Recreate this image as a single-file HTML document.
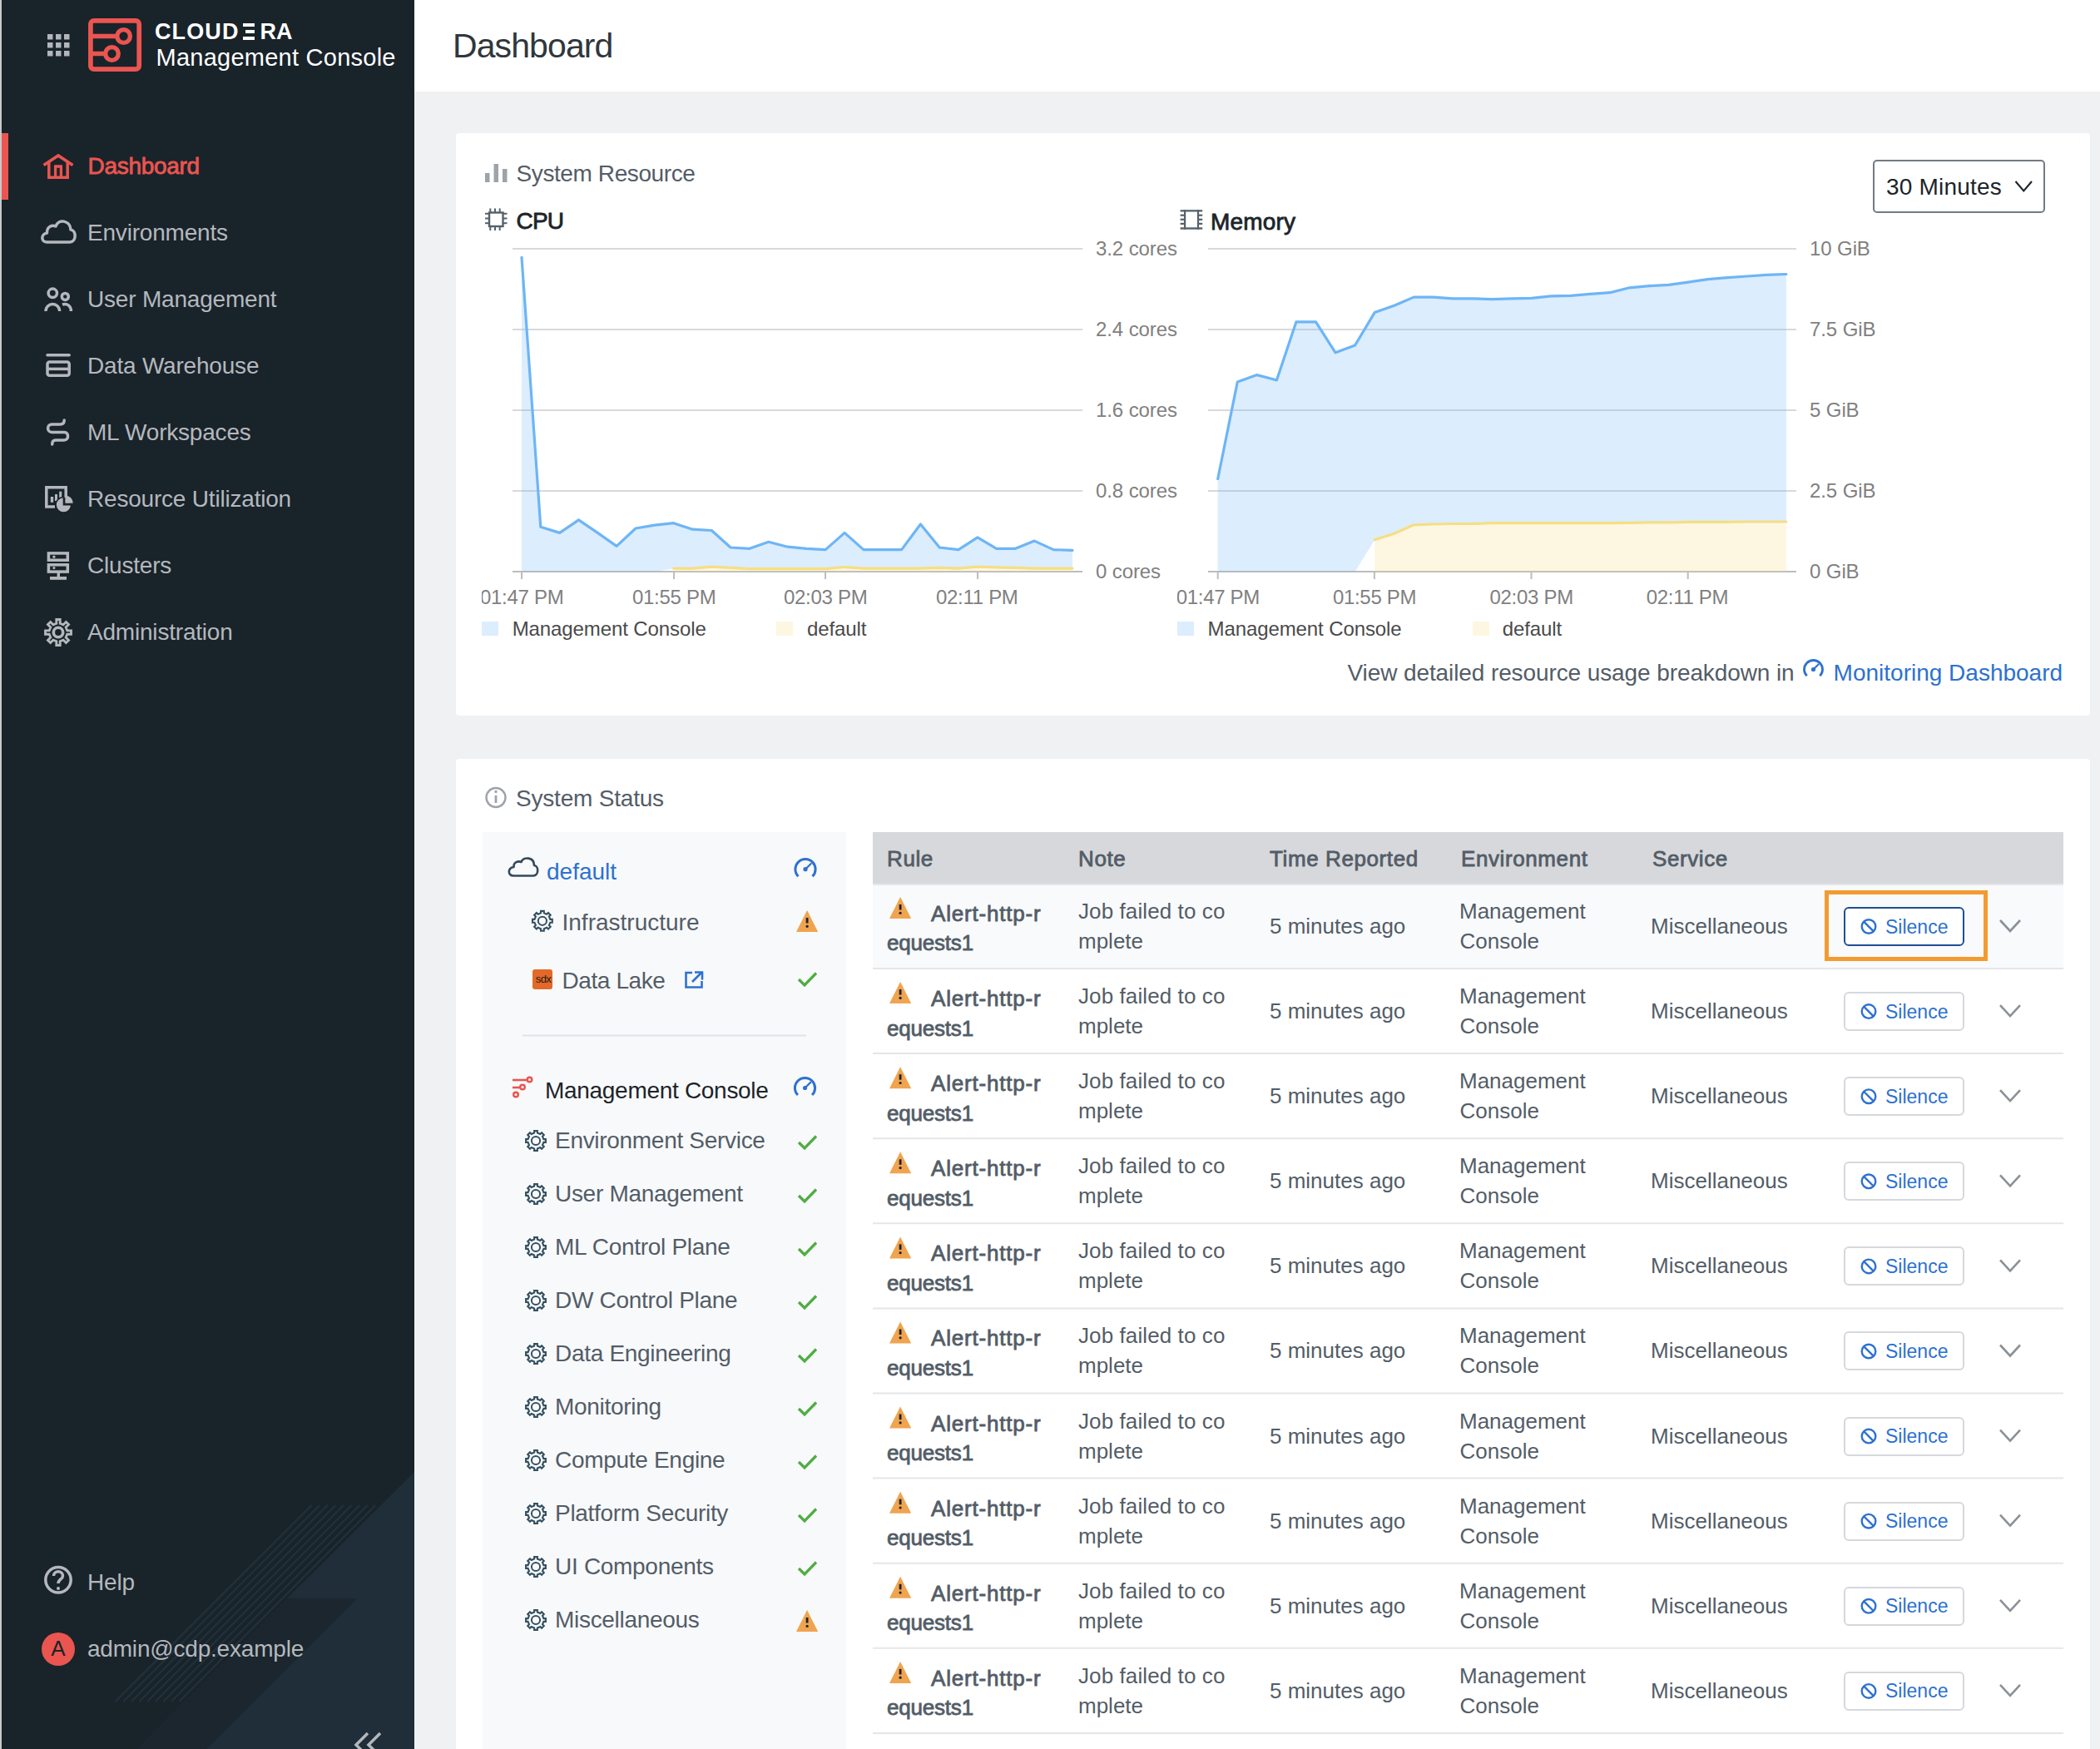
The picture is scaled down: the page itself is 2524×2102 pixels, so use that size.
<!DOCTYPE html><html><head><meta charset="utf-8"><style>
html,body{margin:0;padding:0;}
body{width:2524px;height:2102px;position:relative;overflow:hidden;background:#eff1f3;font-family:"Liberation Sans", sans-serif;}
.t{position:absolute;white-space:nowrap;font-family:"Liberation Sans", sans-serif;}
.r{position:absolute;}
svg{position:absolute;left:0;top:0;overflow:visible;}
</style></head><body>
<div class="r" style="left:498px;top:0px;width:2026px;height:110px;background:#ffffff;"></div>
<div class="t" style="left:544.0px;top:35.1px;font-size:41px;line-height:41px;color:#30373d;font-weight:400;letter-spacing:-0.9px;">Dashboard</div>
<div class="r" style="left:0px;top:0px;width:498px;height:2102px;background:#19232a;"></div>
<div class="r" style="left:0px;top:0px;width:2px;height:2102px;background:#c9c9c9;"></div>
<svg width="2524" height="2102" style="left:0;top:0">
<polygon points="498,1769 345,1921 429,1921 248,2102 498,2102" fill="#1f2e38"/>
<polygon points="429,1921 345,1921 164,2102 248,2102" fill="#1b262e"/>
</svg>
<svg width="2524" height="2102"><line x1="374.6" y1="1809" x2="138.6" y2="2045" stroke="#21313b" stroke-width="2.2"/><line x1="384.2" y1="1809" x2="148.2" y2="2045" stroke="#21313b" stroke-width="2.2"/><line x1="393.8" y1="1809" x2="157.8" y2="2045" stroke="#21313b" stroke-width="2.2"/><line x1="403.4" y1="1809" x2="167.4" y2="2045" stroke="#21313b" stroke-width="2.2"/><line x1="413.0" y1="1809" x2="177.0" y2="2045" stroke="#21313b" stroke-width="2.2"/><line x1="422.6" y1="1809" x2="186.6" y2="2045" stroke="#21313b" stroke-width="2.2"/><line x1="432.2" y1="1809" x2="196.2" y2="2045" stroke="#21313b" stroke-width="2.2"/><line x1="441.8" y1="1809" x2="205.8" y2="2045" stroke="#21313b" stroke-width="2.2"/><line x1="451.4" y1="1809" x2="215.4" y2="2045" stroke="#21313b" stroke-width="2.2"/></svg>
<div class="r" style="left:2px;top:160px;width:8px;height:80px;background:#ea5550;"></div>
<svg width="2524" height="2102"><rect x="57" y="41" width="6.5" height="6.5" fill="#b2b5ba"/><rect x="57" y="51" width="6.5" height="6.5" fill="#b2b5ba"/><rect x="57" y="61" width="6.5" height="6.5" fill="#b2b5ba"/><rect x="67" y="41" width="6.5" height="6.5" fill="#b2b5ba"/><rect x="67" y="51" width="6.5" height="6.5" fill="#b2b5ba"/><rect x="67" y="61" width="6.5" height="6.5" fill="#b2b5ba"/><rect x="77" y="41" width="6.5" height="6.5" fill="#b2b5ba"/><rect x="77" y="51" width="6.5" height="6.5" fill="#b2b5ba"/><rect x="77" y="61" width="6.5" height="6.5" fill="#b2b5ba"/></svg>
<svg width="2524" height="2102">
<rect x="108.9" y="24.9" width="58.3" height="58.3" rx="4" fill="none" stroke="#ea5550" stroke-width="5.7"/>
<line x1="109" y1="43.5" x2="140" y2="43.5" stroke="#ea5550" stroke-width="5.5"/>
<circle cx="148.6" cy="43.5" r="7.8" fill="none" stroke="#ea5550" stroke-width="5.3"/>
<line x1="109" y1="64.5" x2="126" y2="64.5" stroke="#ea5550" stroke-width="5.5"/>
<circle cx="134.5" cy="64.5" r="7.8" fill="none" stroke="#ea5550" stroke-width="5.3"/>
</svg>
<div class="t" style="left:186.0px;top:24.8px;font-size:27px;line-height:27px;color:#ffffff;font-weight:700;letter-spacing:1.1px;">CLOUD</div>
<div class="t" style="left:312.5px;top:24.8px;font-size:27px;line-height:27px;color:#ffffff;font-weight:700;">RA</div>
<div class="r" style="left:292px;top:28.4px;width:13.6px;height:3.5px;background:#ffffff;"></div>
<div class="r" style="left:295px;top:36.3px;width:10.6px;height:3.4px;background:#ffffff;"></div>
<div class="r" style="left:292px;top:44.4px;width:13.6px;height:3.5px;background:#ffffff;"></div>
<div class="t" style="left:187.5px;top:55.1px;font-size:29px;line-height:29px;color:#ffffff;font-weight:400;letter-spacing:0.25px;">Management Console</div>
<div class="t" style="left:105.5px;top:186.2px;font-size:28px;line-height:28px;color:#ea5550;font-weight:400;letter-spacing:-0.3px;-webkit-text-stroke:0.8px currentColor;">Dashboard</div>
<div class="t" style="left:105.0px;top:266.2px;font-size:28px;line-height:28px;color:#b4b8bd;font-weight:400;letter-spacing:-0.2px;">Environments</div>
<div class="t" style="left:105.0px;top:346.2px;font-size:28px;line-height:28px;color:#b4b8bd;font-weight:400;letter-spacing:-0.2px;">User Management</div>
<div class="t" style="left:105.0px;top:426.2px;font-size:28px;line-height:28px;color:#b4b8bd;font-weight:400;letter-spacing:-0.2px;">Data Warehouse</div>
<div class="t" style="left:105.0px;top:506.2px;font-size:28px;line-height:28px;color:#b4b8bd;font-weight:400;letter-spacing:-0.2px;">ML Workspaces</div>
<div class="t" style="left:105.0px;top:586.2px;font-size:28px;line-height:28px;color:#b4b8bd;font-weight:400;letter-spacing:-0.2px;">Resource Utilization</div>
<div class="t" style="left:105.0px;top:666.2px;font-size:28px;line-height:28px;color:#b4b8bd;font-weight:400;letter-spacing:-0.2px;">Clusters</div>
<div class="t" style="left:105.0px;top:746.2px;font-size:28px;line-height:28px;color:#b4b8bd;font-weight:400;letter-spacing:-0.2px;">Administration</div>
<div class="t" style="left:105.0px;top:1887.7px;font-size:28px;line-height:28px;color:#b4b8bd;font-weight:400;letter-spacing:-0.2px;">Help</div>
<div class="t" style="left:105.0px;top:1967.7px;font-size:28px;line-height:28px;color:#b4b8bd;font-weight:400;letter-spacing:-0.2px;">admin@cdp.example</div>
<svg width="2524" height="2102">
<polyline points="52.5,198.5 70,187 87.5,198.5" stroke="#ea5550" stroke-width="3.6" fill="none"/>
<polyline points="58.8,194 58.8,213.2 81.2,213.2 81.2,194" stroke="#ea5550" stroke-width="3.5" fill="none"/>
<polyline points="66.6,213 66.6,200 73.4,200 73.4,213" stroke="#ea5550" stroke-width="3.3" fill="none"/>
<path d="M56,291 C49,291 49,281 56.5,280 C56,272 63,270 67,272 C70,263 84,264 85,276 C92,277 92,291 84,291 Z" stroke="#b4b8bd" stroke-width="3.5" fill="none" stroke-linejoin="round"/>
<circle cx="63.3" cy="352.3" r="5.2" stroke="#b4b8bd" stroke-width="3.5" fill="none"/>
<path d="M54.9,374 A8.4,8.4 0 0 1 71.7,374" stroke="#b4b8bd" stroke-width="3.5" fill="none"/>
<circle cx="78.3" cy="356.4" r="4" stroke="#b4b8bd" stroke-width="3.5" fill="none"/>
<path d="M75,366 C81,364 85.4,368 85.4,374" stroke="#b4b8bd" stroke-width="3.5" fill="none"/>
<line x1="57" y1="426.7" x2="83.2" y2="426.7" stroke="#b4b8bd" stroke-width="3.5" fill="none" stroke-linecap="round"/>
<rect x="57" y="435" width="26.2" height="16.3" rx="2.5" stroke="#b4b8bd" stroke-width="3.5" fill="none"/>
<line x1="57" y1="443.4" x2="83.2" y2="443.4" stroke="#b4b8bd" stroke-width="3.5" fill="none"/>
<path d="M77.2,505 C77.2,509 75,510 72,510 L62.3,510 C56,510 56,519.4 62.3,519.4 L77.2,519.4 C83,519.4 83,529 77.2,529 L66.8,529 C63,529 62.7,532 62.7,534" stroke="#b4b8bd" stroke-width="3.5" fill="none" stroke-linecap="round"/>
<polyline points="79.2,598 79.2,585.8 55.8,585.8 55.8,609 66,609" stroke="#b4b8bd" stroke-width="3.5" fill="none"/>
<rect x="60.8" y="597" width="3.4" height="6.8" fill="#b4b8bd"/>
<rect x="66" y="594" width="3" height="8" fill="#b4b8bd"/>
<rect x="71.2" y="590.7" width="3" height="8" fill="#b4b8bd"/>
<path d="M76.4,597.4 A9.3,9.3 0 1 0 85.7,606.7 L76.4,606.7 Z" fill="#b4b8bd" stroke="#19232a" stroke-width="1.5"/>
<path d="M78.4,595.4 A9.3,9.3 0 0 1 87.7,604.7 L78.4,604.7 Z" fill="#b4b8bd"/>
<rect x="58.4" y="664.9" width="22.9" height="8.3" stroke="#b4b8bd" stroke-width="3.5" fill="none" stroke-width="3.3"/>
<rect x="58.4" y="678.8" width="22.9" height="8.3" stroke="#b4b8bd" stroke-width="3.5" fill="none" stroke-width="3.3"/>
<circle cx="64.9" cy="669.2" r="1.6" fill="#b4b8bd"/>
<circle cx="64.9" cy="682.5" r="1.6" fill="#b4b8bd"/>
<rect x="68.6" y="688" width="3.4" height="5.5" fill="#b4b8bd"/>
<rect x="60" y="693" width="20" height="3.8" fill="#b4b8bd"/>
<path d="M80.78,757.80 L85.50,757.80 L85.50,762.20 L80.78,762.20 L79.18,766.07 L82.52,769.40 L79.40,772.52 L76.07,769.18 L72.20,770.78 L72.20,775.50 L67.80,775.50 L67.80,770.78 L63.93,769.18 L60.60,772.52 L57.48,769.40 L60.82,766.07 L59.22,762.20 L54.50,762.20 L54.50,757.80 L59.22,757.80 L60.82,753.93 L57.48,750.60 L60.60,747.48 L63.93,750.82 L67.80,749.22 L67.80,744.50 L72.20,744.50 L72.20,749.22 L76.07,750.82 L79.40,747.48 L82.52,750.60 L79.18,753.93 Z" stroke="#b4b8bd" stroke-width="2.85" fill="none" stroke-linejoin="miter"/>
<circle cx="70" cy="760" r="5.7" stroke="#b4b8bd" stroke-width="3.6" fill="none"/>
<circle cx="70" cy="1898.7" r="15.2" stroke="#b4b8bd" stroke-width="3.5" fill="none"/>
<path d="M64.5,1894 C64.5,1887 75.5,1887 75.5,1894 C75.5,1898 70,1898 70,1903" stroke="#b4b8bd" stroke-width="3.5" fill="none"/>
<circle cx="70" cy="1909" r="2" fill="#b4b8bd"/>
<circle cx="70" cy="1982" r="20" fill="#ea5550"/>
<polyline points="442,2083 428,2097 442,2111" stroke="#b4b8bd" stroke-width="3.5" fill="none"/>
<polyline points="457,2083 443,2097 457,2111" stroke="#b4b8bd" stroke-width="3.5" fill="none"/>
</svg>
<div class="t" style="left:50px;top:1967.9px;width:40px;text-align:center;font-size:26px;line-height:26px;color:#1a2329">A</div>
<div class="r" style="left:548px;top:160px;width:1964px;height:700px;background:#ffffff;border-radius:4px;"></div>
<svg width="2524" height="2102">
<rect x="583" y="208" width="5.5" height="11" fill="#9ea3a9"/>
<rect x="593.5" y="197" width="5.5" height="22" fill="#9ea3a9"/>
<rect x="604" y="203" width="5.5" height="16" fill="#9ea3a9"/>
</svg>
<div class="t" style="left:620.5px;top:194.7px;font-size:28px;line-height:28px;color:#535d67;font-weight:400;letter-spacing:-0.4px;">System Resource</div>
<svg width="2524" height="2102"><rect x="588" y="255.5" width="16.5" height="16.5" fill="none" stroke="#56616b" stroke-width="2.4"/><line x1="589.3" y1="250.5" x2="589.3" y2="255.5" stroke="#56616b" stroke-width="2"/><line x1="589.3" y1="272.0" x2="589.3" y2="277.0" stroke="#56616b" stroke-width="2"/><line x1="583" y1="256.8" x2="588" y2="256.8" stroke="#56616b" stroke-width="2"/><line x1="604.5" y1="256.8" x2="609.5" y2="256.8" stroke="#56616b" stroke-width="2"/><line x1="595.0" y1="250.5" x2="595.0" y2="255.5" stroke="#56616b" stroke-width="2"/><line x1="595.0" y1="272.0" x2="595.0" y2="277.0" stroke="#56616b" stroke-width="2"/><line x1="583" y1="262.5" x2="588" y2="262.5" stroke="#56616b" stroke-width="2"/><line x1="604.5" y1="262.5" x2="609.5" y2="262.5" stroke="#56616b" stroke-width="2"/><line x1="600.7" y1="250.5" x2="600.7" y2="255.5" stroke="#56616b" stroke-width="2"/><line x1="600.7" y1="272.0" x2="600.7" y2="277.0" stroke="#56616b" stroke-width="2"/><line x1="583" y1="268.2" x2="588" y2="268.2" stroke="#56616b" stroke-width="2"/><line x1="604.5" y1="268.2" x2="609.5" y2="268.2" stroke="#56616b" stroke-width="2"/><rect x="1418.6" y="252.2" width="26.6" height="2.3" fill="#56616b"/><rect x="1418.6" y="273.3" width="26.6" height="2.4" fill="#56616b"/><rect x="1423" y="252.2" width="2.2" height="23.5" fill="#56616b"/><rect x="1438.9" y="252.2" width="2.2" height="23.5" fill="#56616b"/><rect x="1418.6" y="257.6" width="4.5" height="2.2" fill="#56616b"/><rect x="1441" y="257.6" width="4.2" height="2.2" fill="#56616b"/><rect x="1418.6" y="262.7" width="4.5" height="2.2" fill="#56616b"/><rect x="1441" y="262.7" width="4.2" height="2.2" fill="#56616b"/><rect x="1418.6" y="267.8" width="4.5" height="2.2" fill="#56616b"/><rect x="1441" y="267.8" width="4.2" height="2.2" fill="#56616b"/></svg>
<div class="t" style="left:620.6px;top:251.9px;font-size:28px;line-height:28px;color:#1c242a;font-weight:400;letter-spacing:-0.9px;-webkit-text-stroke:0.8px currentColor;">CPU</div>
<div class="t" style="left:1455.0px;top:253.1px;font-size:28px;line-height:28px;color:#1c242a;font-weight:400;letter-spacing:0.2px;-webkit-text-stroke:0.8px currentColor;">Memory</div>
<div class="r" style="left:2251px;top:192px;width:207px;height:64px;background:#ffffff;box-sizing:border-box;border:2px solid #737a83;border-radius:5px;"></div>
<div class="t" style="left:2267.0px;top:210.8px;font-size:28px;line-height:28px;color:#1c242a;font-weight:400;letter-spacing:0.2px;">30 Minutes</div>
<svg width="2524" height="2102"><polyline points="2422.5,218 2432.3,229.5 2442,218" stroke="#1c242a" stroke-width="2.1" fill="none"/></svg>
<svg width="2524" height="2102"><line x1="616" y1="299" x2="1301" y2="299" stroke="#d9d9d9" stroke-width="2"/><line x1="616" y1="396" x2="1301" y2="396" stroke="#d9d9d9" stroke-width="2"/><line x1="616" y1="493" x2="1301" y2="493" stroke="#d9d9d9" stroke-width="2"/><line x1="616" y1="590" x2="1301" y2="590" stroke="#d9d9d9" stroke-width="2"/><line x1="616" y1="687" x2="1301" y2="687" stroke="#bdbdbd" stroke-width="2"/><line x1="627" y1="687" x2="627" y2="696" stroke="#bdbdbd" stroke-width="2"/><line x1="810" y1="687" x2="810" y2="696" stroke="#bdbdbd" stroke-width="2"/><line x1="992" y1="687" x2="992" y2="696" stroke="#bdbdbd" stroke-width="2"/><line x1="1175" y1="687" x2="1175" y2="696" stroke="#bdbdbd" stroke-width="2"/><polygon points="627.0,309.3 649.8,633.3 672.7,640.4 695.5,624.9 718.3,640.4 741.1,656.4 764.0,635.0 786.8,631.2 809.6,628.7 832.4,636.2 855.3,637.5 878.1,658.0 900.9,659.3 923.8,651.3 946.6,657.2 969.4,659.3 992.2,660.6 1015.1,640.4 1037.9,660.6 1060.7,660.6 1083.6,660.6 1106.4,630.0 1129.2,658.0 1152.0,660.6 1174.9,645.9 1197.7,659.3 1220.5,659.3 1243.3,650.1 1266.2,660.6 1289.0,661.4 1289.0,683.2 1266.2,683.2 1243.3,683.2 1220.5,682.3 1197.7,681.9 1174.9,681.1 1152.0,683.2 1129.2,682.3 1106.4,683.2 1083.6,683.2 1060.7,683.2 1037.9,683.2 1015.1,681.5 992.2,683.6 969.4,683.6 946.6,683.6 923.8,683.6 900.9,683.6 878.1,682.3 855.3,681.1 832.4,683.2 809.6,683.2 786.8,687.0 764.0,687.0 741.1,687.0 718.3,687.0 695.5,687.0 672.7,687.0 649.8,687.0 627.0,687.0" fill="#6db5f6" fill-opacity="0.24"/><polygon points="809.6,683.2 832.4,683.2 855.3,681.1 878.1,682.3 900.9,683.6 923.8,683.6 946.6,683.6 969.4,683.6 992.2,683.6 1015.1,681.5 1037.9,683.2 1060.7,683.2 1083.6,683.2 1106.4,683.2 1129.2,682.3 1152.0,683.2 1174.9,681.1 1197.7,681.9 1220.5,682.3 1243.3,683.2 1266.2,683.2 1289.0,683.2 1289.0,687.0 809.6,687.0" fill="#f5de84" fill-opacity="0.24"/><polyline points="809.6,683.2 832.4,683.2 855.3,681.1 878.1,682.3 900.9,683.6 923.8,683.6 946.6,683.6 969.4,683.6 992.2,683.6 1015.1,681.5 1037.9,683.2 1060.7,683.2 1083.6,683.2 1106.4,683.2 1129.2,682.3 1152.0,683.2 1174.9,681.1 1197.7,681.9 1220.5,682.3 1243.3,683.2 1266.2,683.2 1289.0,683.2" fill="none" stroke="#f5de84" stroke-width="3.2" stroke-linejoin="round" stroke-linecap="round"/><polyline points="627.0,309.3 649.8,633.3 672.7,640.4 695.5,624.9 718.3,640.4 741.1,656.4 764.0,635.0 786.8,631.2 809.6,628.7 832.4,636.2 855.3,637.5 878.1,658.0 900.9,659.3 923.8,651.3 946.6,657.2 969.4,659.3 992.2,660.6 1015.1,640.4 1037.9,660.6 1060.7,660.6 1083.6,660.6 1106.4,630.0 1129.2,658.0 1152.0,660.6 1174.9,645.9 1197.7,659.3 1220.5,659.3 1243.3,650.1 1266.2,660.6 1289.0,661.4" fill="none" stroke="#6db5f6" stroke-width="3.2" stroke-linejoin="round" stroke-linecap="round"/></svg>
<div class="t" style="left:1317.0px;top:287.1px;font-size:24px;line-height:24px;color:#808080;font-weight:400;letter-spacing:-0.1px;">3.2 cores</div>
<div class="t" style="left:1317.0px;top:384.1px;font-size:24px;line-height:24px;color:#808080;font-weight:400;letter-spacing:-0.1px;">2.4 cores</div>
<div class="t" style="left:1317.0px;top:481.1px;font-size:24px;line-height:24px;color:#808080;font-weight:400;letter-spacing:-0.1px;">1.6 cores</div>
<div class="t" style="left:1317.0px;top:578.1px;font-size:24px;line-height:24px;color:#808080;font-weight:400;letter-spacing:-0.1px;">0.8 cores</div>
<div class="t" style="left:1317.0px;top:675.1px;font-size:24px;line-height:24px;color:#808080;font-weight:400;letter-spacing:-0.1px;">0 cores</div>
<div class="t" style="left:579px;top:705.6px;width:108.0px;height:30px;overflow:hidden;font-size:24px;line-height:24px;color:#808080;letter-spacing:-0.3px"><span style="position:absolute;left:-2.0px;top:0;white-space:nowrap">01:47 PM</span></div>
<div class="t" style="left:760.0px;top:705.6px;font-size:24px;line-height:24px;color:#808080;font-weight:400;letter-spacing:-0.3px;">01:55 PM</div>
<div class="t" style="left:942.0px;top:705.6px;font-size:24px;line-height:24px;color:#808080;font-weight:400;letter-spacing:-0.3px;">02:03 PM</div>
<div class="t" style="left:1125.0px;top:705.6px;font-size:24px;line-height:24px;color:#808080;font-weight:400;letter-spacing:-0.3px;">02:11 PM</div>
<svg width="2524" height="2102"><line x1="1452" y1="299" x2="2159" y2="299" stroke="#d9d9d9" stroke-width="2"/><line x1="1452" y1="396" x2="2159" y2="396" stroke="#d9d9d9" stroke-width="2"/><line x1="1452" y1="493" x2="2159" y2="493" stroke="#d9d9d9" stroke-width="2"/><line x1="1452" y1="590" x2="2159" y2="590" stroke="#d9d9d9" stroke-width="2"/><line x1="1452" y1="687" x2="2159" y2="687" stroke="#bdbdbd" stroke-width="2"/><line x1="1463.7" y1="687" x2="1463.7" y2="696" stroke="#bdbdbd" stroke-width="2"/><line x1="1651.9" y1="687" x2="1651.9" y2="696" stroke="#bdbdbd" stroke-width="2"/><line x1="1840.5" y1="687" x2="1840.5" y2="696" stroke="#bdbdbd" stroke-width="2"/><line x1="2028.7" y1="687" x2="2028.7" y2="696" stroke="#bdbdbd" stroke-width="2"/><polygon points="1463.7,575.5 1487.3,459.0 1510.8,450.6 1534.4,456.9 1557.9,386.9 1581.5,386.9 1605.1,423.8 1628.6,415.0 1652.2,375.6 1675.7,367.2 1699.3,357.1 1722.8,357.1 1746.4,358.8 1770.0,358.8 1793.5,359.6 1817.1,358.8 1840.6,358.4 1864.2,355.9 1887.8,355.4 1911.3,353.3 1934.9,351.7 1958.4,345.8 1982.0,343.7 2005.5,342.4 2029.1,339.1 2052.7,335.7 2076.2,333.6 2099.8,332.0 2123.3,330.3 2146.9,329.5 2146.9,627.0 2123.3,627.0 2099.8,627.0 2076.2,627.4 2052.7,627.4 2029.1,627.4 2005.5,627.9 1982.0,627.9 1958.4,628.3 1934.9,628.7 1911.3,628.7 1887.8,628.7 1864.2,628.7 1840.6,628.7 1817.1,628.7 1793.5,628.7 1770.0,629.5 1746.4,629.5 1722.8,630.0 1699.3,630.8 1675.7,641.3 1652.2,648.8 1628.6,687.0 1605.1,687.0 1581.5,687.0 1557.9,687.0 1534.4,687.0 1510.8,687.0 1487.3,687.0 1463.7,687.0" fill="#6db5f6" fill-opacity="0.24"/><polygon points="1652.2,648.8 1675.7,641.3 1699.3,630.8 1722.8,630.0 1746.4,629.5 1770.0,629.5 1793.5,628.7 1817.1,628.7 1840.6,628.7 1864.2,628.7 1887.8,628.7 1911.3,628.7 1934.9,628.7 1958.4,628.3 1982.0,627.9 2005.5,627.9 2029.1,627.4 2052.7,627.4 2076.2,627.4 2099.8,627.0 2123.3,627.0 2146.9,627.0 2146.9,687.0 1652.2,687.0" fill="#f5de84" fill-opacity="0.24"/><polyline points="1652.2,648.8 1675.7,641.3 1699.3,630.8 1722.8,630.0 1746.4,629.5 1770.0,629.5 1793.5,628.7 1817.1,628.7 1840.6,628.7 1864.2,628.7 1887.8,628.7 1911.3,628.7 1934.9,628.7 1958.4,628.3 1982.0,627.9 2005.5,627.9 2029.1,627.4 2052.7,627.4 2076.2,627.4 2099.8,627.0 2123.3,627.0 2146.9,627.0" fill="none" stroke="#f5de84" stroke-width="3.2" stroke-linejoin="round" stroke-linecap="round"/><polyline points="1463.7,575.5 1487.3,459.0 1510.8,450.6 1534.4,456.9 1557.9,386.9 1581.5,386.9 1605.1,423.8 1628.6,415.0 1652.2,375.6 1675.7,367.2 1699.3,357.1 1722.8,357.1 1746.4,358.8 1770.0,358.8 1793.5,359.6 1817.1,358.8 1840.6,358.4 1864.2,355.9 1887.8,355.4 1911.3,353.3 1934.9,351.7 1958.4,345.8 1982.0,343.7 2005.5,342.4 2029.1,339.1 2052.7,335.7 2076.2,333.6 2099.8,332.0 2123.3,330.3 2146.9,329.5" fill="none" stroke="#6db5f6" stroke-width="3.2" stroke-linejoin="round" stroke-linecap="round"/></svg>
<div class="t" style="left:2175.0px;top:287.1px;font-size:24px;line-height:24px;color:#808080;font-weight:400;letter-spacing:-0.1px;">10 GiB</div>
<div class="t" style="left:2175.0px;top:384.1px;font-size:24px;line-height:24px;color:#808080;font-weight:400;letter-spacing:-0.1px;">7.5 GiB</div>
<div class="t" style="left:2175.0px;top:481.1px;font-size:24px;line-height:24px;color:#808080;font-weight:400;letter-spacing:-0.1px;">5 GiB</div>
<div class="t" style="left:2175.0px;top:578.1px;font-size:24px;line-height:24px;color:#808080;font-weight:400;letter-spacing:-0.1px;">2.5 GiB</div>
<div class="t" style="left:2175.0px;top:675.1px;font-size:24px;line-height:24px;color:#808080;font-weight:400;letter-spacing:-0.1px;">0 GiB</div>
<div class="t" style="left:1414.7px;top:705.6px;width:109.0px;height:30px;overflow:hidden;font-size:24px;line-height:24px;color:#808080;letter-spacing:-0.3px"><span style="position:absolute;left:-1.0px;top:0;white-space:nowrap">01:47 PM</span></div>
<div class="t" style="left:1601.9px;top:705.6px;font-size:24px;line-height:24px;color:#808080;font-weight:400;letter-spacing:-0.3px;">01:55 PM</div>
<div class="t" style="left:1790.5px;top:705.6px;font-size:24px;line-height:24px;color:#808080;font-weight:400;letter-spacing:-0.3px;">02:03 PM</div>
<div class="t" style="left:1978.7px;top:705.6px;font-size:24px;line-height:24px;color:#808080;font-weight:400;letter-spacing:-0.3px;">02:11 PM</div>
<div class="r" style="left:579px;top:747px;width:20px;height:17px;background:#dcedfd;"></div>
<div class="t" style="left:615.7px;top:743.6px;font-size:24px;line-height:24px;color:#4a4a4a;font-weight:400;letter-spacing:-0.1px;">Management Console</div>
<div class="r" style="left:933px;top:747px;width:20px;height:17px;background:#fdf7e1;"></div>
<div class="t" style="left:970.0px;top:743.6px;font-size:24px;line-height:24px;color:#4a4a4a;font-weight:400;letter-spacing:-0.1px;">default</div>
<div class="r" style="left:1414.7px;top:747px;width:20px;height:17px;background:#dcedfd;"></div>
<div class="t" style="left:1451.5px;top:743.6px;font-size:24px;line-height:24px;color:#4a4a4a;font-weight:400;letter-spacing:-0.1px;">Management Console</div>
<div class="r" style="left:1769.7px;top:747px;width:20px;height:17px;background:#fdf7e1;"></div>
<div class="t" style="left:1805.7px;top:743.6px;font-size:24px;line-height:24px;color:#4a4a4a;font-weight:400;letter-spacing:-0.1px;">default</div>
<div class="t" style="left:1619.5px;top:794.7px;font-size:28px;line-height:28px;color:#535d67;font-weight:400;letter-spacing:-0.1px;">View detailed resource usage breakdown in</div>
<svg width="2524" height="2102"><path d="M2171.72,812.28 A11,11 0 1 1 2187.28,812.28" fill="none" stroke="#2d71d0" stroke-width="2.8"/><line x1="2179.5" y1="804.5" x2="2185.55" y2="798.45" stroke="#2d71d0" stroke-width="2.2" stroke-linecap="round"/><circle cx="2179.5" cy="804.5" r="2.6" fill="#2d71d0"/></svg>
<div class="t" style="left:2203.6px;top:794.7px;font-size:28px;line-height:28px;color:#2d71d0;font-weight:400;">Monitoring Dashboard</div>
<div class="r" style="left:548px;top:912px;width:1964px;height:1300px;background:#ffffff;border-radius:4px;"></div>
<svg width="2524" height="2102">
<circle cx="596" cy="958.5" r="11.5" fill="none" stroke="#9ea3a9" stroke-width="2.4"/>
<rect x="594.6" y="956" width="2.8" height="9" fill="#9ea3a9"/>
<circle cx="596" cy="951.5" r="1.7" fill="#9ea3a9"/>
</svg>
<div class="t" style="left:620.0px;top:946.2px;font-size:28px;line-height:28px;color:#535d67;font-weight:400;letter-spacing:-0.2px;">System Status</div>
<div class="r" style="left:580px;top:1000px;width:437px;height:1200px;background:#f8f9fb;"></div>
<svg width="2524" height="2102"><path d="M617,1052.5 C610,1052.5 610,1043 617.5,1042 C617,1036 623,1034.5 626.5,1036 C629,1029 642,1030 642,1040 C648,1041 647.5,1052.5 641,1052.5 Z" fill="none" stroke="#33495a" stroke-width="2.6" stroke-linejoin="round"/><path d="M959.44,1053.26 A12.1,12.1 0 1 1 976.56,1053.26" fill="none" stroke="#2d71d0" stroke-width="3"/><line x1="968" y1="1044.7" x2="974.65" y2="1038.05" stroke="#2d71d0" stroke-width="2.2" stroke-linecap="round"/><circle cx="968" cy="1044.7" r="2.6" fill="#2d71d0"/><path d="M661.31,1104.90 L663.80,1104.90 L663.80,1108.70 L661.31,1108.70 L659.90,1112.11 L661.66,1113.87 L658.97,1116.56 L657.21,1114.80 L653.80,1116.21 L653.80,1118.70 L650.00,1118.70 L650.00,1116.21 L646.59,1114.80 L644.83,1116.56 L642.14,1113.87 L643.90,1112.11 L642.49,1108.70 L640.00,1108.70 L640.00,1104.90 L642.49,1104.90 L643.90,1101.49 L642.14,1099.73 L644.83,1097.04 L646.59,1098.80 L650.00,1097.39 L650.00,1094.90 L653.80,1094.90 L653.80,1097.39 L657.21,1098.80 L658.97,1097.04 L661.66,1099.73 L659.90,1101.49 Z" fill="none" stroke="#34505f" stroke-width="2.1"/><circle cx="651.9" cy="1106.8" r="5.1" fill="none" stroke="#34505f" stroke-width="2.0"/><polygon points="970.1,1094 983.2,1120 957,1120" fill="#f0a44f"/><rect x="968.7" y="1103.0" width="2.8" height="6.5" fill="#1c242a"/><circle cx="970.1" cy="1113.3" r="1.6" fill="#1c242a"/><rect x="640" y="1165" width="24" height="24" rx="3" fill="#e3692b"/><polyline points="832,1169 824.5,1169 824.5,1186.5 843.5,1186.5 843.5,1179" fill="none" stroke="#2d71d0" stroke-width="2.6"/><line x1="832" y1="1180" x2="843" y2="1169" stroke="#2d71d0" stroke-width="2.6"/><polyline points="835,1168.5 844,1168.5 844,1177.5" fill="none" stroke="#2d71d0" stroke-width="2.6"/><polyline points="960,1177 967,1184 981,1169.5" fill="none" stroke="#4fad42" stroke-width="3.3"/><line x1="628" y1="1244.5" x2="969" y2="1244.5" stroke="#e0e3e7" stroke-width="2"/><line x1="616" y1="1298" x2="633" y2="1298" stroke="#ea5550" stroke-width="2.6"/><circle cx="636.5" cy="1297.5" r="2.8" fill="none" stroke="#ea5550" stroke-width="2.4"/><line x1="616" y1="1307" x2="625" y2="1307" stroke="#ea5550" stroke-width="2.6"/><circle cx="628" cy="1306.5" r="2.8" fill="none" stroke="#ea5550" stroke-width="2.4"/><circle cx="620" cy="1315.5" r="2.8" fill="none" stroke="#ea5550" stroke-width="2.4"/><path d="M958.94,1316.06 A12.1,12.1 0 1 1 976.06,1316.06" fill="none" stroke="#2d71d0" stroke-width="3"/><line x1="967.5" y1="1307.5" x2="974.15" y2="1300.85" stroke="#2d71d0" stroke-width="2.2" stroke-linecap="round"/><circle cx="967.5" cy="1307.5" r="2.6" fill="#2d71d0"/><path d="M653.41,1369.10 L655.90,1369.10 L655.90,1372.90 L653.41,1372.90 L652.00,1376.31 L653.76,1378.07 L651.07,1380.76 L649.31,1379.00 L645.90,1380.41 L645.90,1382.90 L642.10,1382.90 L642.10,1380.41 L638.69,1379.00 L636.93,1380.76 L634.24,1378.07 L636.00,1376.31 L634.59,1372.90 L632.10,1372.90 L632.10,1369.10 L634.59,1369.10 L636.00,1365.69 L634.24,1363.93 L636.93,1361.24 L638.69,1363.00 L642.10,1361.59 L642.10,1359.10 L645.90,1359.10 L645.90,1361.59 L649.31,1363.00 L651.07,1361.24 L653.76,1363.93 L652.00,1365.69 Z" fill="none" stroke="#34505f" stroke-width="2.1"/><circle cx="644" cy="1371" r="5.1" fill="none" stroke="#34505f" stroke-width="2.0"/><polyline points="960,1373 967,1380 981,1365.5" fill="none" stroke="#4fad42" stroke-width="3.3"/><path d="M653.41,1433.10 L655.90,1433.10 L655.90,1436.90 L653.41,1436.90 L652.00,1440.31 L653.76,1442.07 L651.07,1444.76 L649.31,1443.00 L645.90,1444.41 L645.90,1446.90 L642.10,1446.90 L642.10,1444.41 L638.69,1443.00 L636.93,1444.76 L634.24,1442.07 L636.00,1440.31 L634.59,1436.90 L632.10,1436.90 L632.10,1433.10 L634.59,1433.10 L636.00,1429.69 L634.24,1427.93 L636.93,1425.24 L638.69,1427.00 L642.10,1425.59 L642.10,1423.10 L645.90,1423.10 L645.90,1425.59 L649.31,1427.00 L651.07,1425.24 L653.76,1427.93 L652.00,1429.69 Z" fill="none" stroke="#34505f" stroke-width="2.1"/><circle cx="644" cy="1435" r="5.1" fill="none" stroke="#34505f" stroke-width="2.0"/><polyline points="960,1437 967,1444 981,1429.5" fill="none" stroke="#4fad42" stroke-width="3.3"/><path d="M653.41,1497.10 L655.90,1497.10 L655.90,1500.90 L653.41,1500.90 L652.00,1504.31 L653.76,1506.07 L651.07,1508.76 L649.31,1507.00 L645.90,1508.41 L645.90,1510.90 L642.10,1510.90 L642.10,1508.41 L638.69,1507.00 L636.93,1508.76 L634.24,1506.07 L636.00,1504.31 L634.59,1500.90 L632.10,1500.90 L632.10,1497.10 L634.59,1497.10 L636.00,1493.69 L634.24,1491.93 L636.93,1489.24 L638.69,1491.00 L642.10,1489.59 L642.10,1487.10 L645.90,1487.10 L645.90,1489.59 L649.31,1491.00 L651.07,1489.24 L653.76,1491.93 L652.00,1493.69 Z" fill="none" stroke="#34505f" stroke-width="2.1"/><circle cx="644" cy="1499" r="5.1" fill="none" stroke="#34505f" stroke-width="2.0"/><polyline points="960,1501 967,1508 981,1493.5" fill="none" stroke="#4fad42" stroke-width="3.3"/><path d="M653.41,1561.10 L655.90,1561.10 L655.90,1564.90 L653.41,1564.90 L652.00,1568.31 L653.76,1570.07 L651.07,1572.76 L649.31,1571.00 L645.90,1572.41 L645.90,1574.90 L642.10,1574.90 L642.10,1572.41 L638.69,1571.00 L636.93,1572.76 L634.24,1570.07 L636.00,1568.31 L634.59,1564.90 L632.10,1564.90 L632.10,1561.10 L634.59,1561.10 L636.00,1557.69 L634.24,1555.93 L636.93,1553.24 L638.69,1555.00 L642.10,1553.59 L642.10,1551.10 L645.90,1551.10 L645.90,1553.59 L649.31,1555.00 L651.07,1553.24 L653.76,1555.93 L652.00,1557.69 Z" fill="none" stroke="#34505f" stroke-width="2.1"/><circle cx="644" cy="1563" r="5.1" fill="none" stroke="#34505f" stroke-width="2.0"/><polyline points="960,1565 967,1572 981,1557.5" fill="none" stroke="#4fad42" stroke-width="3.3"/><path d="M653.41,1625.10 L655.90,1625.10 L655.90,1628.90 L653.41,1628.90 L652.00,1632.31 L653.76,1634.07 L651.07,1636.76 L649.31,1635.00 L645.90,1636.41 L645.90,1638.90 L642.10,1638.90 L642.10,1636.41 L638.69,1635.00 L636.93,1636.76 L634.24,1634.07 L636.00,1632.31 L634.59,1628.90 L632.10,1628.90 L632.10,1625.10 L634.59,1625.10 L636.00,1621.69 L634.24,1619.93 L636.93,1617.24 L638.69,1619.00 L642.10,1617.59 L642.10,1615.10 L645.90,1615.10 L645.90,1617.59 L649.31,1619.00 L651.07,1617.24 L653.76,1619.93 L652.00,1621.69 Z" fill="none" stroke="#34505f" stroke-width="2.1"/><circle cx="644" cy="1627" r="5.1" fill="none" stroke="#34505f" stroke-width="2.0"/><polyline points="960,1629 967,1636 981,1621.5" fill="none" stroke="#4fad42" stroke-width="3.3"/><path d="M653.41,1689.10 L655.90,1689.10 L655.90,1692.90 L653.41,1692.90 L652.00,1696.31 L653.76,1698.07 L651.07,1700.76 L649.31,1699.00 L645.90,1700.41 L645.90,1702.90 L642.10,1702.90 L642.10,1700.41 L638.69,1699.00 L636.93,1700.76 L634.24,1698.07 L636.00,1696.31 L634.59,1692.90 L632.10,1692.90 L632.10,1689.10 L634.59,1689.10 L636.00,1685.69 L634.24,1683.93 L636.93,1681.24 L638.69,1683.00 L642.10,1681.59 L642.10,1679.10 L645.90,1679.10 L645.90,1681.59 L649.31,1683.00 L651.07,1681.24 L653.76,1683.93 L652.00,1685.69 Z" fill="none" stroke="#34505f" stroke-width="2.1"/><circle cx="644" cy="1691" r="5.1" fill="none" stroke="#34505f" stroke-width="2.0"/><polyline points="960,1693 967,1700 981,1685.5" fill="none" stroke="#4fad42" stroke-width="3.3"/><path d="M653.41,1753.10 L655.90,1753.10 L655.90,1756.90 L653.41,1756.90 L652.00,1760.31 L653.76,1762.07 L651.07,1764.76 L649.31,1763.00 L645.90,1764.41 L645.90,1766.90 L642.10,1766.90 L642.10,1764.41 L638.69,1763.00 L636.93,1764.76 L634.24,1762.07 L636.00,1760.31 L634.59,1756.90 L632.10,1756.90 L632.10,1753.10 L634.59,1753.10 L636.00,1749.69 L634.24,1747.93 L636.93,1745.24 L638.69,1747.00 L642.10,1745.59 L642.10,1743.10 L645.90,1743.10 L645.90,1745.59 L649.31,1747.00 L651.07,1745.24 L653.76,1747.93 L652.00,1749.69 Z" fill="none" stroke="#34505f" stroke-width="2.1"/><circle cx="644" cy="1755" r="5.1" fill="none" stroke="#34505f" stroke-width="2.0"/><polyline points="960,1757 967,1764 981,1749.5" fill="none" stroke="#4fad42" stroke-width="3.3"/><path d="M653.41,1817.10 L655.90,1817.10 L655.90,1820.90 L653.41,1820.90 L652.00,1824.31 L653.76,1826.07 L651.07,1828.76 L649.31,1827.00 L645.90,1828.41 L645.90,1830.90 L642.10,1830.90 L642.10,1828.41 L638.69,1827.00 L636.93,1828.76 L634.24,1826.07 L636.00,1824.31 L634.59,1820.90 L632.10,1820.90 L632.10,1817.10 L634.59,1817.10 L636.00,1813.69 L634.24,1811.93 L636.93,1809.24 L638.69,1811.00 L642.10,1809.59 L642.10,1807.10 L645.90,1807.10 L645.90,1809.59 L649.31,1811.00 L651.07,1809.24 L653.76,1811.93 L652.00,1813.69 Z" fill="none" stroke="#34505f" stroke-width="2.1"/><circle cx="644" cy="1819" r="5.1" fill="none" stroke="#34505f" stroke-width="2.0"/><polyline points="960,1821 967,1828 981,1813.5" fill="none" stroke="#4fad42" stroke-width="3.3"/><path d="M653.41,1881.10 L655.90,1881.10 L655.90,1884.90 L653.41,1884.90 L652.00,1888.31 L653.76,1890.07 L651.07,1892.76 L649.31,1891.00 L645.90,1892.41 L645.90,1894.90 L642.10,1894.90 L642.10,1892.41 L638.69,1891.00 L636.93,1892.76 L634.24,1890.07 L636.00,1888.31 L634.59,1884.90 L632.10,1884.90 L632.10,1881.10 L634.59,1881.10 L636.00,1877.69 L634.24,1875.93 L636.93,1873.24 L638.69,1875.00 L642.10,1873.59 L642.10,1871.10 L645.90,1871.10 L645.90,1873.59 L649.31,1875.00 L651.07,1873.24 L653.76,1875.93 L652.00,1877.69 Z" fill="none" stroke="#34505f" stroke-width="2.1"/><circle cx="644" cy="1883" r="5.1" fill="none" stroke="#34505f" stroke-width="2.0"/><polyline points="960,1885 967,1892 981,1877.5" fill="none" stroke="#4fad42" stroke-width="3.3"/><path d="M653.41,1945.10 L655.90,1945.10 L655.90,1948.90 L653.41,1948.90 L652.00,1952.31 L653.76,1954.07 L651.07,1956.76 L649.31,1955.00 L645.90,1956.41 L645.90,1958.90 L642.10,1958.90 L642.10,1956.41 L638.69,1955.00 L636.93,1956.76 L634.24,1954.07 L636.00,1952.31 L634.59,1948.90 L632.10,1948.90 L632.10,1945.10 L634.59,1945.10 L636.00,1941.69 L634.24,1939.93 L636.93,1937.24 L638.69,1939.00 L642.10,1937.59 L642.10,1935.10 L645.90,1935.10 L645.90,1937.59 L649.31,1939.00 L651.07,1937.24 L653.76,1939.93 L652.00,1941.69 Z" fill="none" stroke="#34505f" stroke-width="2.1"/><circle cx="644" cy="1947" r="5.1" fill="none" stroke="#34505f" stroke-width="2.0"/><polygon points="970.1,1935 983.2,1961 957,1961" fill="#f0a44f"/><rect x="968.7" y="1944.0" width="2.8" height="6.5" fill="#1c242a"/><circle cx="970.1" cy="1954.3" r="1.6" fill="#1c242a"/></svg>
<div class="t" style="left:642px;top:1170px;width:22px;height:14px;font-size:13px;line-height:14px;color:#2a1a10;text-align:center;letter-spacing:-0.5px">sdx</div>
<div class="t" style="left:657.0px;top:1034.2px;font-size:28px;line-height:28px;color:#2d71d0;font-weight:400;">default</div>
<div class="t" style="left:675.5px;top:1095.2px;font-size:28px;line-height:28px;color:#535d67;font-weight:400;">Infrastructure</div>
<div class="t" style="left:675.5px;top:1165.2px;font-size:28px;line-height:28px;color:#535d67;font-weight:400;letter-spacing:-0.4px;">Data Lake</div>
<div class="t" style="left:655.0px;top:1297.2px;font-size:28px;line-height:28px;color:#1c242a;font-weight:400;letter-spacing:-0.3px;">Management Console</div>
<div class="t" style="left:667.0px;top:1357.2px;font-size:28px;line-height:28px;color:#535d67;font-weight:400;letter-spacing:-0.3px;">Environment Service</div>
<div class="t" style="left:667.0px;top:1421.2px;font-size:28px;line-height:28px;color:#535d67;font-weight:400;letter-spacing:-0.3px;">User Management</div>
<div class="t" style="left:667.0px;top:1485.2px;font-size:28px;line-height:28px;color:#535d67;font-weight:400;letter-spacing:-0.3px;">ML Control Plane</div>
<div class="t" style="left:667.0px;top:1549.2px;font-size:28px;line-height:28px;color:#535d67;font-weight:400;letter-spacing:-0.3px;">DW Control Plane</div>
<div class="t" style="left:667.0px;top:1613.2px;font-size:28px;line-height:28px;color:#535d67;font-weight:400;letter-spacing:-0.3px;">Data Engineering</div>
<div class="t" style="left:667.0px;top:1677.2px;font-size:28px;line-height:28px;color:#535d67;font-weight:400;letter-spacing:-0.3px;">Monitoring</div>
<div class="t" style="left:667.0px;top:1741.2px;font-size:28px;line-height:28px;color:#535d67;font-weight:400;letter-spacing:-0.3px;">Compute Engine</div>
<div class="t" style="left:667.0px;top:1805.2px;font-size:28px;line-height:28px;color:#535d67;font-weight:400;letter-spacing:-0.3px;">Platform Security</div>
<div class="t" style="left:667.0px;top:1869.2px;font-size:28px;line-height:28px;color:#535d67;font-weight:400;letter-spacing:-0.3px;">UI Components</div>
<div class="t" style="left:667.0px;top:1933.2px;font-size:28px;line-height:28px;color:#535d67;font-weight:400;letter-spacing:-0.3px;">Miscellaneous</div>
<div class="r" style="left:1049px;top:1000px;width:1431px;height:62px;background:#d7d8dc;"></div>
<div class="r" style="left:1049px;top:1062px;width:1431px;height:2px;background:#e5e6e9;"></div>
<div class="t" style="left:1066.0px;top:1018.9px;font-size:26px;line-height:26px;color:#535d67;font-weight:400;letter-spacing:0.6px;-webkit-text-stroke:0.8px currentColor;">Rule</div>
<div class="t" style="left:1296.0px;top:1018.9px;font-size:26px;line-height:26px;color:#535d67;font-weight:400;letter-spacing:0.6px;-webkit-text-stroke:0.8px currentColor;">Note</div>
<div class="t" style="left:1526.0px;top:1018.9px;font-size:26px;line-height:26px;color:#535d67;font-weight:400;letter-spacing:0.6px;-webkit-text-stroke:0.8px currentColor;">Time Reported</div>
<div class="t" style="left:1756.0px;top:1018.9px;font-size:26px;line-height:26px;color:#535d67;font-weight:400;letter-spacing:0.6px;-webkit-text-stroke:0.8px currentColor;">Environment</div>
<div class="t" style="left:1986.0px;top:1018.9px;font-size:26px;line-height:26px;color:#535d67;font-weight:400;letter-spacing:0.6px;-webkit-text-stroke:0.8px currentColor;">Service</div>
<div class="r" style="left:1049px;top:1064px;width:1431px;height:100px;background:#f9fafc;"></div>
<div class="r" style="left:2193px;top:1070px;width:196px;height:85px;background:transparent;box-sizing:border-box;border:5px solid #f29b30;"></div>
<div class="r" style="left:2216px;top:1090.0px;width:145px;height:47px;background:#ffffff;box-sizing:border-box;border:2px solid #1f4f94;border-radius:6px;"></div>
<div class="r" style="left:2216px;top:1192px;width:145px;height:47px;background:#ffffff;box-sizing:border-box;border:2px solid #d5d8dc;border-radius:6px;"></div>
<div class="r" style="left:2216px;top:1294px;width:145px;height:47px;background:#ffffff;box-sizing:border-box;border:2px solid #d5d8dc;border-radius:6px;"></div>
<div class="r" style="left:2216px;top:1396px;width:145px;height:47px;background:#ffffff;box-sizing:border-box;border:2px solid #d5d8dc;border-radius:6px;"></div>
<div class="r" style="left:2216px;top:1498px;width:145px;height:47px;background:#ffffff;box-sizing:border-box;border:2px solid #d5d8dc;border-radius:6px;"></div>
<div class="r" style="left:2216px;top:1600px;width:145px;height:47px;background:#ffffff;box-sizing:border-box;border:2px solid #d5d8dc;border-radius:6px;"></div>
<div class="r" style="left:2216px;top:1703px;width:145px;height:47px;background:#ffffff;box-sizing:border-box;border:2px solid #d5d8dc;border-radius:6px;"></div>
<div class="r" style="left:2216px;top:1805px;width:145px;height:47px;background:#ffffff;box-sizing:border-box;border:2px solid #d5d8dc;border-radius:6px;"></div>
<div class="r" style="left:2216px;top:1907px;width:145px;height:47px;background:#ffffff;box-sizing:border-box;border:2px solid #d5d8dc;border-radius:6px;"></div>
<div class="r" style="left:2216px;top:2009px;width:145px;height:47px;background:#ffffff;box-sizing:border-box;border:2px solid #d5d8dc;border-radius:6px;"></div>
<svg width="2524" height="2102"><line x1="1049" y1="1164.0" x2="2480" y2="1164.0" stroke="#e4e6e9" stroke-width="2"/><polygon points="1082.1,1078.0 1095.2,1104.0 1069,1104.0" fill="#f0a44f"/><rect x="1080.7" y="1087.0" width="2.8" height="6.5" fill="#1c242a"/><circle cx="1082.1" cy="1097.3" r="1.6" fill="#1c242a"/><circle cx="2246" cy="1113.5" r="8.3" fill="none" stroke="#2d71d0" stroke-width="2.4"/><line x1="2240.3" y1="1107.8" x2="2251.7" y2="1119.2" stroke="#2d71d0" stroke-width="2.4"/><polyline points="2404,1106.0 2416,1119.0 2428,1106.0" fill="none" stroke="#8a9198" stroke-width="2.6"/><line x1="1049" y1="1266.1" x2="2480" y2="1266.1" stroke="#e4e6e9" stroke-width="2"/><polygon points="1082.1,1180.1 1095.2,1206.1 1069,1206.1" fill="#f0a44f"/><rect x="1080.7" y="1189.1" width="2.8" height="6.5" fill="#1c242a"/><circle cx="1082.1" cy="1199.4" r="1.6" fill="#1c242a"/><circle cx="2246" cy="1215.6" r="8.3" fill="none" stroke="#2d71d0" stroke-width="2.4"/><line x1="2240.3" y1="1209.9" x2="2251.7" y2="1221.3" stroke="#2d71d0" stroke-width="2.4"/><polyline points="2404,1208.1 2416,1221.1 2428,1208.1" fill="none" stroke="#8a9198" stroke-width="2.6"/><line x1="1049" y1="1368.2" x2="2480" y2="1368.2" stroke="#e4e6e9" stroke-width="2"/><polygon points="1082.1,1282.2 1095.2,1308.2 1069,1308.2" fill="#f0a44f"/><rect x="1080.7" y="1291.2" width="2.8" height="6.5" fill="#1c242a"/><circle cx="1082.1" cy="1301.5" r="1.6" fill="#1c242a"/><circle cx="2246" cy="1317.7" r="8.3" fill="none" stroke="#2d71d0" stroke-width="2.4"/><line x1="2240.3" y1="1312.0" x2="2251.7" y2="1323.4" stroke="#2d71d0" stroke-width="2.4"/><polyline points="2404,1310.2 2416,1323.2 2428,1310.2" fill="none" stroke="#8a9198" stroke-width="2.6"/><line x1="1049" y1="1470.3" x2="2480" y2="1470.3" stroke="#e4e6e9" stroke-width="2"/><polygon points="1082.1,1384.3 1095.2,1410.3 1069,1410.3" fill="#f0a44f"/><rect x="1080.7" y="1393.3" width="2.8" height="6.5" fill="#1c242a"/><circle cx="1082.1" cy="1403.6" r="1.6" fill="#1c242a"/><circle cx="2246" cy="1419.8" r="8.3" fill="none" stroke="#2d71d0" stroke-width="2.4"/><line x1="2240.3" y1="1414.1" x2="2251.7" y2="1425.5" stroke="#2d71d0" stroke-width="2.4"/><polyline points="2404,1412.3 2416,1425.3 2428,1412.3" fill="none" stroke="#8a9198" stroke-width="2.6"/><line x1="1049" y1="1572.4" x2="2480" y2="1572.4" stroke="#e4e6e9" stroke-width="2"/><polygon points="1082.1,1486.4 1095.2,1512.4 1069,1512.4" fill="#f0a44f"/><rect x="1080.7" y="1495.4" width="2.8" height="6.5" fill="#1c242a"/><circle cx="1082.1" cy="1505.7" r="1.6" fill="#1c242a"/><circle cx="2246" cy="1521.9" r="8.3" fill="none" stroke="#2d71d0" stroke-width="2.4"/><line x1="2240.3" y1="1516.2" x2="2251.7" y2="1527.6" stroke="#2d71d0" stroke-width="2.4"/><polyline points="2404,1514.4 2416,1527.4 2428,1514.4" fill="none" stroke="#8a9198" stroke-width="2.6"/><line x1="1049" y1="1674.5" x2="2480" y2="1674.5" stroke="#e4e6e9" stroke-width="2"/><polygon points="1082.1,1588.5 1095.2,1614.5 1069,1614.5" fill="#f0a44f"/><rect x="1080.7" y="1597.5" width="2.8" height="6.5" fill="#1c242a"/><circle cx="1082.1" cy="1607.8" r="1.6" fill="#1c242a"/><circle cx="2246" cy="1624.0" r="8.3" fill="none" stroke="#2d71d0" stroke-width="2.4"/><line x1="2240.3" y1="1618.3" x2="2251.7" y2="1629.7" stroke="#2d71d0" stroke-width="2.4"/><polyline points="2404,1616.5 2416,1629.5 2428,1616.5" fill="none" stroke="#8a9198" stroke-width="2.6"/><line x1="1049" y1="1776.6" x2="2480" y2="1776.6" stroke="#e4e6e9" stroke-width="2"/><polygon points="1082.1,1690.6 1095.2,1716.6 1069,1716.6" fill="#f0a44f"/><rect x="1080.7" y="1699.6" width="2.8" height="6.5" fill="#1c242a"/><circle cx="1082.1" cy="1709.9" r="1.6" fill="#1c242a"/><circle cx="2246" cy="1726.1" r="8.3" fill="none" stroke="#2d71d0" stroke-width="2.4"/><line x1="2240.3" y1="1720.4" x2="2251.7" y2="1731.8" stroke="#2d71d0" stroke-width="2.4"/><polyline points="2404,1718.6 2416,1731.6 2428,1718.6" fill="none" stroke="#8a9198" stroke-width="2.6"/><line x1="1049" y1="1878.7" x2="2480" y2="1878.7" stroke="#e4e6e9" stroke-width="2"/><polygon points="1082.1,1792.6999999999998 1095.2,1818.6999999999998 1069,1818.6999999999998" fill="#f0a44f"/><rect x="1080.7" y="1801.7" width="2.8" height="6.5" fill="#1c242a"/><circle cx="1082.1" cy="1812.0" r="1.6" fill="#1c242a"/><circle cx="2246" cy="1828.2" r="8.3" fill="none" stroke="#2d71d0" stroke-width="2.4"/><line x1="2240.3" y1="1822.5" x2="2251.7" y2="1833.9" stroke="#2d71d0" stroke-width="2.4"/><polyline points="2404,1820.7 2416,1833.7 2428,1820.7" fill="none" stroke="#8a9198" stroke-width="2.6"/><line x1="1049" y1="1980.8" x2="2480" y2="1980.8" stroke="#e4e6e9" stroke-width="2"/><polygon points="1082.1,1894.8 1095.2,1920.8 1069,1920.8" fill="#f0a44f"/><rect x="1080.7" y="1903.8" width="2.8" height="6.5" fill="#1c242a"/><circle cx="1082.1" cy="1914.1" r="1.6" fill="#1c242a"/><circle cx="2246" cy="1930.3" r="8.3" fill="none" stroke="#2d71d0" stroke-width="2.4"/><line x1="2240.3" y1="1924.6" x2="2251.7" y2="1936.0" stroke="#2d71d0" stroke-width="2.4"/><polyline points="2404,1922.8 2416,1935.8 2428,1922.8" fill="none" stroke="#8a9198" stroke-width="2.6"/><line x1="1049" y1="2082.9" x2="2480" y2="2082.9" stroke="#e4e6e9" stroke-width="2"/><polygon points="1082.1,1996.9 1095.2,2022.9 1069,2022.9" fill="#f0a44f"/><rect x="1080.7" y="2005.9" width="2.8" height="6.5" fill="#1c242a"/><circle cx="1082.1" cy="2016.2" r="1.6" fill="#1c242a"/><circle cx="2246" cy="2032.4" r="8.3" fill="none" stroke="#2d71d0" stroke-width="2.4"/><line x1="2240.3" y1="2026.7" x2="2251.7" y2="2038.1" stroke="#2d71d0" stroke-width="2.4"/><polyline points="2404,2024.9 2416,2037.9 2428,2024.9" fill="none" stroke="#8a9198" stroke-width="2.6"/></svg>
<div class="t" style="left:1119.0px;top:1084.9px;font-size:26px;line-height:26px;color:#535d67;font-weight:400;letter-spacing:0.8px;-webkit-text-stroke:0.8px currentColor;">Alert-http-r</div>
<div class="t" style="left:1066.0px;top:1120.4px;font-size:26px;line-height:26px;color:#535d67;font-weight:400;letter-spacing:-0.2px;-webkit-text-stroke:0.8px currentColor;">equests1</div>
<div class="t" style="left:1296.0px;top:1081.9px;font-size:26px;line-height:26px;color:#535d67;font-weight:400;letter-spacing:0.1px;">Job failed to co</div>
<div class="t" style="left:1296.0px;top:1117.9px;font-size:26px;line-height:26px;color:#535d67;font-weight:400;">mplete</div>
<div class="t" style="left:1526.0px;top:1099.9px;font-size:26px;line-height:26px;color:#535d67;font-weight:400;">5 minutes ago</div>
<div class="t" style="left:1754.0px;top:1081.9px;font-size:26px;line-height:26px;color:#535d67;font-weight:400;">Management</div>
<div class="t" style="left:1754.5px;top:1117.9px;font-size:26px;line-height:26px;color:#535d67;font-weight:400;">Console</div>
<div class="t" style="left:1984.0px;top:1099.9px;font-size:26px;line-height:26px;color:#535d67;font-weight:400;">Miscellaneous</div>
<div class="t" style="left:2266.0px;top:1102.5px;font-size:23px;line-height:23px;color:#2d71d0;font-weight:400;">Silence</div>
<div class="t" style="left:1119.0px;top:1187.0px;font-size:26px;line-height:26px;color:#535d67;font-weight:400;letter-spacing:0.8px;-webkit-text-stroke:0.8px currentColor;">Alert-http-r</div>
<div class="t" style="left:1066.0px;top:1222.5px;font-size:26px;line-height:26px;color:#535d67;font-weight:400;letter-spacing:-0.2px;-webkit-text-stroke:0.8px currentColor;">equests1</div>
<div class="t" style="left:1296.0px;top:1184.0px;font-size:26px;line-height:26px;color:#535d67;font-weight:400;letter-spacing:0.1px;">Job failed to co</div>
<div class="t" style="left:1296.0px;top:1220.0px;font-size:26px;line-height:26px;color:#535d67;font-weight:400;">mplete</div>
<div class="t" style="left:1526.0px;top:1202.0px;font-size:26px;line-height:26px;color:#535d67;font-weight:400;">5 minutes ago</div>
<div class="t" style="left:1754.0px;top:1184.0px;font-size:26px;line-height:26px;color:#535d67;font-weight:400;">Management</div>
<div class="t" style="left:1754.5px;top:1220.0px;font-size:26px;line-height:26px;color:#535d67;font-weight:400;">Console</div>
<div class="t" style="left:1984.0px;top:1202.0px;font-size:26px;line-height:26px;color:#535d67;font-weight:400;">Miscellaneous</div>
<div class="t" style="left:2266.0px;top:1204.5px;font-size:23px;line-height:23px;color:#2d71d0;font-weight:400;">Silence</div>
<div class="t" style="left:1119.0px;top:1289.1px;font-size:26px;line-height:26px;color:#535d67;font-weight:400;letter-spacing:0.8px;-webkit-text-stroke:0.8px currentColor;">Alert-http-r</div>
<div class="t" style="left:1066.0px;top:1324.6px;font-size:26px;line-height:26px;color:#535d67;font-weight:400;letter-spacing:-0.2px;-webkit-text-stroke:0.8px currentColor;">equests1</div>
<div class="t" style="left:1296.0px;top:1286.1px;font-size:26px;line-height:26px;color:#535d67;font-weight:400;letter-spacing:0.1px;">Job failed to co</div>
<div class="t" style="left:1296.0px;top:1322.1px;font-size:26px;line-height:26px;color:#535d67;font-weight:400;">mplete</div>
<div class="t" style="left:1526.0px;top:1304.1px;font-size:26px;line-height:26px;color:#535d67;font-weight:400;">5 minutes ago</div>
<div class="t" style="left:1754.0px;top:1286.1px;font-size:26px;line-height:26px;color:#535d67;font-weight:400;">Management</div>
<div class="t" style="left:1754.5px;top:1322.1px;font-size:26px;line-height:26px;color:#535d67;font-weight:400;">Console</div>
<div class="t" style="left:1984.0px;top:1304.1px;font-size:26px;line-height:26px;color:#535d67;font-weight:400;">Miscellaneous</div>
<div class="t" style="left:2266.0px;top:1306.7px;font-size:23px;line-height:23px;color:#2d71d0;font-weight:400;">Silence</div>
<div class="t" style="left:1119.0px;top:1391.2px;font-size:26px;line-height:26px;color:#535d67;font-weight:400;letter-spacing:0.8px;-webkit-text-stroke:0.8px currentColor;">Alert-http-r</div>
<div class="t" style="left:1066.0px;top:1426.7px;font-size:26px;line-height:26px;color:#535d67;font-weight:400;letter-spacing:-0.2px;-webkit-text-stroke:0.8px currentColor;">equests1</div>
<div class="t" style="left:1296.0px;top:1388.2px;font-size:26px;line-height:26px;color:#535d67;font-weight:400;letter-spacing:0.1px;">Job failed to co</div>
<div class="t" style="left:1296.0px;top:1424.2px;font-size:26px;line-height:26px;color:#535d67;font-weight:400;">mplete</div>
<div class="t" style="left:1526.0px;top:1406.2px;font-size:26px;line-height:26px;color:#535d67;font-weight:400;">5 minutes ago</div>
<div class="t" style="left:1754.0px;top:1388.2px;font-size:26px;line-height:26px;color:#535d67;font-weight:400;">Management</div>
<div class="t" style="left:1754.5px;top:1424.2px;font-size:26px;line-height:26px;color:#535d67;font-weight:400;">Console</div>
<div class="t" style="left:1984.0px;top:1406.2px;font-size:26px;line-height:26px;color:#535d67;font-weight:400;">Miscellaneous</div>
<div class="t" style="left:2266.0px;top:1408.8px;font-size:23px;line-height:23px;color:#2d71d0;font-weight:400;">Silence</div>
<div class="t" style="left:1119.0px;top:1493.3px;font-size:26px;line-height:26px;color:#535d67;font-weight:400;letter-spacing:0.8px;-webkit-text-stroke:0.8px currentColor;">Alert-http-r</div>
<div class="t" style="left:1066.0px;top:1528.8px;font-size:26px;line-height:26px;color:#535d67;font-weight:400;letter-spacing:-0.2px;-webkit-text-stroke:0.8px currentColor;">equests1</div>
<div class="t" style="left:1296.0px;top:1490.3px;font-size:26px;line-height:26px;color:#535d67;font-weight:400;letter-spacing:0.1px;">Job failed to co</div>
<div class="t" style="left:1296.0px;top:1526.3px;font-size:26px;line-height:26px;color:#535d67;font-weight:400;">mplete</div>
<div class="t" style="left:1526.0px;top:1508.3px;font-size:26px;line-height:26px;color:#535d67;font-weight:400;">5 minutes ago</div>
<div class="t" style="left:1754.0px;top:1490.3px;font-size:26px;line-height:26px;color:#535d67;font-weight:400;">Management</div>
<div class="t" style="left:1754.5px;top:1526.3px;font-size:26px;line-height:26px;color:#535d67;font-weight:400;">Console</div>
<div class="t" style="left:1984.0px;top:1508.3px;font-size:26px;line-height:26px;color:#535d67;font-weight:400;">Miscellaneous</div>
<div class="t" style="left:2266.0px;top:1510.9px;font-size:23px;line-height:23px;color:#2d71d0;font-weight:400;">Silence</div>
<div class="t" style="left:1119.0px;top:1595.4px;font-size:26px;line-height:26px;color:#535d67;font-weight:400;letter-spacing:0.8px;-webkit-text-stroke:0.8px currentColor;">Alert-http-r</div>
<div class="t" style="left:1066.0px;top:1630.9px;font-size:26px;line-height:26px;color:#535d67;font-weight:400;letter-spacing:-0.2px;-webkit-text-stroke:0.8px currentColor;">equests1</div>
<div class="t" style="left:1296.0px;top:1592.4px;font-size:26px;line-height:26px;color:#535d67;font-weight:400;letter-spacing:0.1px;">Job failed to co</div>
<div class="t" style="left:1296.0px;top:1628.4px;font-size:26px;line-height:26px;color:#535d67;font-weight:400;">mplete</div>
<div class="t" style="left:1526.0px;top:1610.4px;font-size:26px;line-height:26px;color:#535d67;font-weight:400;">5 minutes ago</div>
<div class="t" style="left:1754.0px;top:1592.4px;font-size:26px;line-height:26px;color:#535d67;font-weight:400;">Management</div>
<div class="t" style="left:1754.5px;top:1628.4px;font-size:26px;line-height:26px;color:#535d67;font-weight:400;">Console</div>
<div class="t" style="left:1984.0px;top:1610.4px;font-size:26px;line-height:26px;color:#535d67;font-weight:400;">Miscellaneous</div>
<div class="t" style="left:2266.0px;top:1613.0px;font-size:23px;line-height:23px;color:#2d71d0;font-weight:400;">Silence</div>
<div class="t" style="left:1119.0px;top:1697.5px;font-size:26px;line-height:26px;color:#535d67;font-weight:400;letter-spacing:0.8px;-webkit-text-stroke:0.8px currentColor;">Alert-http-r</div>
<div class="t" style="left:1066.0px;top:1733.0px;font-size:26px;line-height:26px;color:#535d67;font-weight:400;letter-spacing:-0.2px;-webkit-text-stroke:0.8px currentColor;">equests1</div>
<div class="t" style="left:1296.0px;top:1694.5px;font-size:26px;line-height:26px;color:#535d67;font-weight:400;letter-spacing:0.1px;">Job failed to co</div>
<div class="t" style="left:1296.0px;top:1730.5px;font-size:26px;line-height:26px;color:#535d67;font-weight:400;">mplete</div>
<div class="t" style="left:1526.0px;top:1712.5px;font-size:26px;line-height:26px;color:#535d67;font-weight:400;">5 minutes ago</div>
<div class="t" style="left:1754.0px;top:1694.5px;font-size:26px;line-height:26px;color:#535d67;font-weight:400;">Management</div>
<div class="t" style="left:1754.5px;top:1730.5px;font-size:26px;line-height:26px;color:#535d67;font-weight:400;">Console</div>
<div class="t" style="left:1984.0px;top:1712.5px;font-size:26px;line-height:26px;color:#535d67;font-weight:400;">Miscellaneous</div>
<div class="t" style="left:2266.0px;top:1715.0px;font-size:23px;line-height:23px;color:#2d71d0;font-weight:400;">Silence</div>
<div class="t" style="left:1119.0px;top:1799.6px;font-size:26px;line-height:26px;color:#535d67;font-weight:400;letter-spacing:0.8px;-webkit-text-stroke:0.8px currentColor;">Alert-http-r</div>
<div class="t" style="left:1066.0px;top:1835.1px;font-size:26px;line-height:26px;color:#535d67;font-weight:400;letter-spacing:-0.2px;-webkit-text-stroke:0.8px currentColor;">equests1</div>
<div class="t" style="left:1296.0px;top:1796.6px;font-size:26px;line-height:26px;color:#535d67;font-weight:400;letter-spacing:0.1px;">Job failed to co</div>
<div class="t" style="left:1296.0px;top:1832.6px;font-size:26px;line-height:26px;color:#535d67;font-weight:400;">mplete</div>
<div class="t" style="left:1526.0px;top:1814.6px;font-size:26px;line-height:26px;color:#535d67;font-weight:400;">5 minutes ago</div>
<div class="t" style="left:1754.0px;top:1796.6px;font-size:26px;line-height:26px;color:#535d67;font-weight:400;">Management</div>
<div class="t" style="left:1754.5px;top:1832.6px;font-size:26px;line-height:26px;color:#535d67;font-weight:400;">Console</div>
<div class="t" style="left:1984.0px;top:1814.6px;font-size:26px;line-height:26px;color:#535d67;font-weight:400;">Miscellaneous</div>
<div class="t" style="left:2266.0px;top:1817.1px;font-size:23px;line-height:23px;color:#2d71d0;font-weight:400;">Silence</div>
<div class="t" style="left:1119.0px;top:1901.7px;font-size:26px;line-height:26px;color:#535d67;font-weight:400;letter-spacing:0.8px;-webkit-text-stroke:0.8px currentColor;">Alert-http-r</div>
<div class="t" style="left:1066.0px;top:1937.2px;font-size:26px;line-height:26px;color:#535d67;font-weight:400;letter-spacing:-0.2px;-webkit-text-stroke:0.8px currentColor;">equests1</div>
<div class="t" style="left:1296.0px;top:1898.7px;font-size:26px;line-height:26px;color:#535d67;font-weight:400;letter-spacing:0.1px;">Job failed to co</div>
<div class="t" style="left:1296.0px;top:1934.7px;font-size:26px;line-height:26px;color:#535d67;font-weight:400;">mplete</div>
<div class="t" style="left:1526.0px;top:1916.7px;font-size:26px;line-height:26px;color:#535d67;font-weight:400;">5 minutes ago</div>
<div class="t" style="left:1754.0px;top:1898.7px;font-size:26px;line-height:26px;color:#535d67;font-weight:400;">Management</div>
<div class="t" style="left:1754.5px;top:1934.7px;font-size:26px;line-height:26px;color:#535d67;font-weight:400;">Console</div>
<div class="t" style="left:1984.0px;top:1916.7px;font-size:26px;line-height:26px;color:#535d67;font-weight:400;">Miscellaneous</div>
<div class="t" style="left:2266.0px;top:1919.2px;font-size:23px;line-height:23px;color:#2d71d0;font-weight:400;">Silence</div>
<div class="t" style="left:1119.0px;top:2003.8px;font-size:26px;line-height:26px;color:#535d67;font-weight:400;letter-spacing:0.8px;-webkit-text-stroke:0.8px currentColor;">Alert-http-r</div>
<div class="t" style="left:1066.0px;top:2039.3px;font-size:26px;line-height:26px;color:#535d67;font-weight:400;letter-spacing:-0.2px;-webkit-text-stroke:0.8px currentColor;">equests1</div>
<div class="t" style="left:1296.0px;top:2000.8px;font-size:26px;line-height:26px;color:#535d67;font-weight:400;letter-spacing:0.1px;">Job failed to co</div>
<div class="t" style="left:1296.0px;top:2036.8px;font-size:26px;line-height:26px;color:#535d67;font-weight:400;">mplete</div>
<div class="t" style="left:1526.0px;top:2018.8px;font-size:26px;line-height:26px;color:#535d67;font-weight:400;">5 minutes ago</div>
<div class="t" style="left:1754.0px;top:2000.8px;font-size:26px;line-height:26px;color:#535d67;font-weight:400;">Management</div>
<div class="t" style="left:1754.5px;top:2036.8px;font-size:26px;line-height:26px;color:#535d67;font-weight:400;">Console</div>
<div class="t" style="left:1984.0px;top:2018.8px;font-size:26px;line-height:26px;color:#535d67;font-weight:400;">Miscellaneous</div>
<div class="t" style="left:2266.0px;top:2021.4px;font-size:23px;line-height:23px;color:#2d71d0;font-weight:400;">Silence</div>
</body></html>
